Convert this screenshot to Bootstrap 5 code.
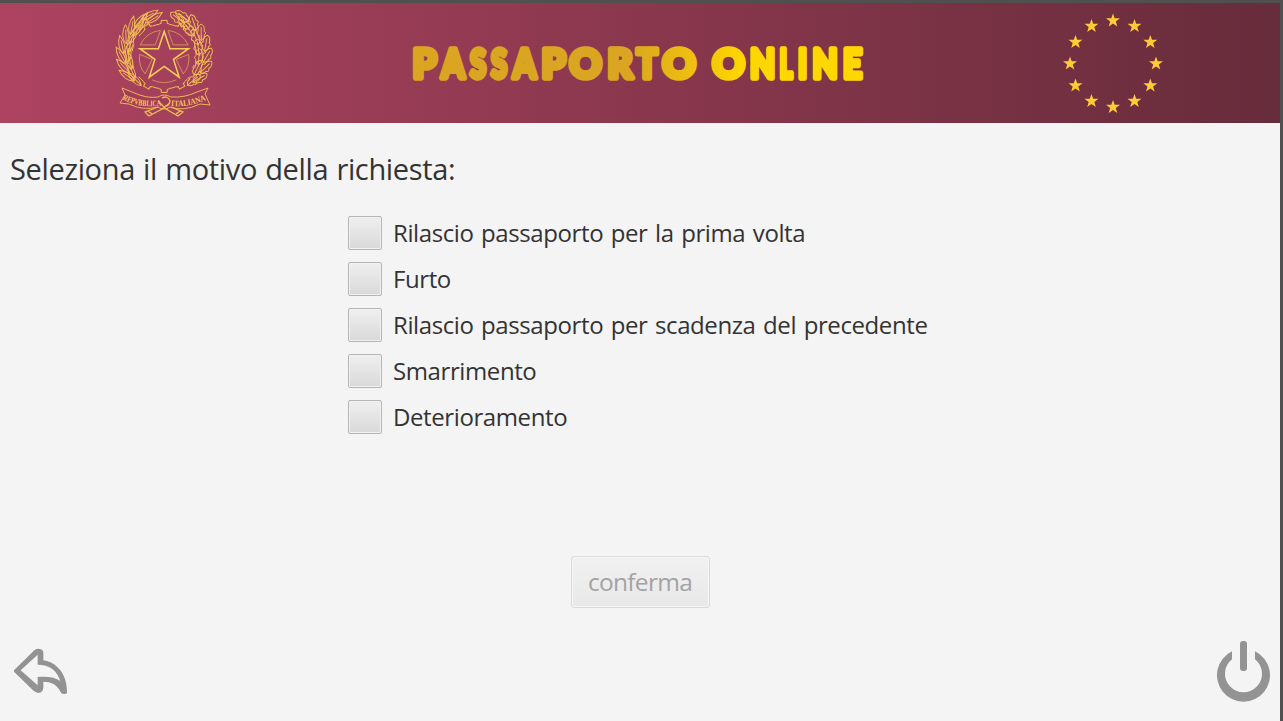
<!DOCTYPE html>
<html lang="it">
<head>
<meta charset="utf-8">
<meta name="viewport" content="width=device-width, initial-scale=1">
<title>Passaporto Online</title>
<link href="https://cdn.jsdelivr.net/npm/bootstrap@5.3.0/dist/css/bootstrap.min.css" rel="stylesheet">
<style>
  body { font-family: "Open Sans", "Noto Sans", sans-serif; color: #333; background: #f4f4f4; }
  .app-window { height: 721px; border-top: 3px solid #505050; border-right: 3px solid #505050; background: #f4f4f4; }
  .app-header { height: 120px; background: linear-gradient(90deg, #ad4360, #672c3b); padding: 0 112px 0 112px; }
  .app-title { font-family: Lato, sans-serif; font-weight: 900; font-size: 40.5px; }
  .question { font-size: 29px; line-height: 40px; padding: 26px 0 0 10px; letter-spacing: -.35px; word-spacing: 1px; }
  .reasons { width: 584px; margin-top: 27px; gap: 12px; }
  .reasons .form-check { min-height: 34px; gap: 11px; font-size: 24px; line-height: 34px; }
  .reasons .form-check-input { width: 34px; height: 34px; border: 1px solid #b5b5b5; border-radius: 2px;
    background: linear-gradient(#efefef, #d9d9d9); box-shadow: inset 0 0 0 1px #f1f1f1; }
  .reasons label { letter-spacing: -.4px; word-spacing: 1.7px; }
  .btn-confirm { width: 139px; height: 52px; margin-top: 122px; font-size: 24.5px; line-height: 36px; letter-spacing: -.7px; border-radius: 3px; }
  .btn-confirm:disabled { color: #a3a3a3; opacity: 1; border-color: #dadada; background: linear-gradient(#f1f1f1, #e8e8e8); box-shadow: inset 0 0 0 1px #f6f6f6; }
  .app-footer { padding: 0 9px 18px 13px; }
  .icon-btn { line-height: 0; color: #939393; }
  .back-btn { margin-bottom: 9px; }
</style>
</head>
<body>
<div class="app-window d-flex flex-column overflow-hidden">
  <header class="app-header d-flex align-items-center justify-content-between flex-shrink-0">
    <svg width="104" height="120" viewBox="112 3 104 120" fill="none" stroke="#f2bd55" stroke-width=".95" aria-hidden="true">
      <defs>
        <path id="olive" d="M0 2C-4-3-3-11 1-17C4-10 4-3 0 2M0 2L1-12"/>
        <path id="oak" d="M0 1Q-4-1-3-4Q-6-6-3-8Q-4-13 0-15Q4-13 3-8Q6-6 3-4Q4-1 0 1M0 2V-12"/>
        <path id="tooth" d="M-5-32.5L-3-33V-36H3V-33L5-32.5"/>
      </defs>
      <g transform="translate(164.2 56.4)">
        <g stroke-width="1">
          <use href="#tooth"/><use href="#tooth" transform="rotate(30)"/><use href="#tooth" transform="rotate(-30)"/>
          <use href="#tooth" transform="rotate(150)"/><use href="#tooth" transform="rotate(-150)"/><use href="#tooth" transform="rotate(180)"/>
          <circle r="32.5" stroke-dasharray="7 10" stroke-dashoffset="-5"/>
        </g>
        <g stroke-width=".8" stroke="#dda155">
          <path d="M-4-26A26 26 0 0 0-24-11.500L-9-11.500L-4-25Z"/>
          <path d="M4-26A26 26 0 0 1 24-11.500L9-11.500L4-25Z"/>
          <path d="M-24.500-2Q-26 10-19 17.500L-12 3Z"/>
          <path d="M24.500-2Q26 10 19 17.500L12 3Z"/>
          <path d="M-12 23.500Q0 29 12 23.500"/>
        </g>
        <path stroke="#ffce55" stroke-width="1.500" d="M0-25L5.800-7.700H24.300L9.300 3L15 20.800L0 10L-15 20.800L-9.300 3L-24.300-7.700H-5.800Z"/>
        <g>
          <use href="#olive" transform="rotate(-25) translate(0 -38) rotate(78)"/>
          <use href="#olive" transform="rotate(-29) translate(0 -43) rotate(85)"/>
          <use href="#olive" transform="rotate(-41) translate(0 -37) rotate(62)"/>
          <use href="#olive" transform="rotate(-43) translate(0 -42) rotate(83)"/>
          <use href="#olive" transform="rotate(-54) translate(0 -37) rotate(84)"/>
          <use href="#olive" transform="rotate(-55) translate(0 -41) rotate(62)"/>
          <use href="#olive" transform="rotate(-67) translate(0 -37) rotate(88)"/>
          <use href="#olive" transform="rotate(-69) translate(0 -41) rotate(64)"/>
          <use href="#olive" transform="rotate(-81) translate(0 -36) rotate(92)"/>
          <use href="#olive" transform="rotate(-84) translate(0 -41) rotate(68)"/>
          <use href="#olive" transform="rotate(-96) translate(0 -36) rotate(92)"/>
          <use href="#olive" transform="rotate(-98) translate(0 -40) rotate(65)"/>
          <use href="#olive" transform="rotate(-109) translate(0 -35) rotate(94)"/>
          <use href="#olive" transform="rotate(-113) translate(0 -39) rotate(66)"/>
          <use href="#olive" transform="rotate(-124) translate(0 -36) rotate(94)"/>
          <use href="#olive" transform="rotate(-127) translate(0 -39) rotate(68)"/>
          <use href="#olive" transform="rotate(-139) translate(0 -37) rotate(90)"/>
        </g>
        <g>
          <use href="#oak" transform="rotate(28) translate(0 -39) rotate(-80)"/>
          <use href="#oak" transform="rotate(33) translate(0 -43) rotate(-85)"/>
          <use href="#oak" transform="rotate(40) translate(0 -37) rotate(-78)"/>
          <use href="#oak" transform="rotate(49) translate(0 -42) rotate(-68)"/>
          <use href="#oak" transform="rotate(53) translate(0 -36) rotate(-88)"/>
          <use href="#oak" transform="rotate(65) translate(0 -41) rotate(-66)"/>
          <use href="#oak" transform="rotate(69) translate(0 -36) rotate(-90)"/>
          <use href="#oak" transform="rotate(81) translate(0 -41) rotate(-70)"/>
          <use href="#oak" transform="rotate(86) translate(0 -35) rotate(-94)"/>
          <use href="#oak" transform="rotate(97) translate(0 -40) rotate(-67)"/>
          <use href="#oak" transform="rotate(102) translate(0 -35) rotate(-98)"/>
          <use href="#oak" transform="rotate(113) translate(0 -40) rotate(-68)"/>
          <use href="#oak" transform="rotate(120) translate(0 -35) rotate(-94)"/>
          <use href="#oak" transform="rotate(130) translate(0 -39) rotate(-70)"/>
          <use href="#oak" transform="rotate(139) translate(0 -37) rotate(-88)"/>
        </g>
      </g>
      <!-- ribbon and crossed stems -->
      <path fill="#a13c59" d="M122 88L132 92Q147 99 158 97Q164 93 171 97Q184 98 197 92L208 88L205 94L210 105L200 104Q183 112 170 107Q164 111 158 107Q143 111 129 104L120 103L125 95Z"/>
      <path stroke-width="1.300" d="M158 107L145 112L149 116L162 109L170 103M171 107L183 112L178 116L166 109L158 101M162 98Q168 95 170 101Q169 106 165 106M148 111L152 114M180 111L176 114"/>
      <path id="mottoL" stroke="none" d="M122.500 99.500Q140 108.500 163 105.500"/>
      <path id="mottoR" stroke="none" d="M171 106Q191 107.500 207.500 99"/>
      <g fill="#f7c657" stroke="none" font-family="Liberation Serif, serif" font-weight="700" font-size="8.500">
        <text><textPath href="#mottoL" textLength="40" lengthAdjust="spacingAndGlyphs">REPVBBLICA</textPath></text>
        <text><textPath href="#mottoR" textLength="36" lengthAdjust="spacingAndGlyphs">ITALIANA</textPath></text>
      </g>
    </svg>

    <h1 class="m-0 lh-1">
      <svg class="app-title" width="460" height="60" viewBox="408 32 460 60">
        <defs>
          <linearGradient id="gold" gradientUnits="userSpaceOnUse" x1="413" x2="863" y1="0" y2="0">
            <stop offset=".48" stop-color="#daa520"/><stop offset=".74" stop-color="#ffd700"/>
          </linearGradient>
        </defs>
        <text y="77.300" fill="url(#gold)" stroke="url(#gold)" stroke-width="5.500" stroke-linejoin="round"><tspan x="413.500" textLength="24" lengthAdjust="spacingAndGlyphs">P</tspan><tspan x="442.500" textLength="23" lengthAdjust="spacingAndGlyphs">A</tspan><tspan x="471" textLength="16" lengthAdjust="spacingAndGlyphs">S</tspan><tspan x="492" textLength="16" lengthAdjust="spacingAndGlyphs">S</tspan><tspan x="514" textLength="23" lengthAdjust="spacingAndGlyphs">A</tspan><tspan x="542.500" textLength="24" lengthAdjust="spacingAndGlyphs">P</tspan><tspan x="570.500" textLength="32" lengthAdjust="spacingAndGlyphs">O</tspan><tspan x="608.500" textLength="25" lengthAdjust="spacingAndGlyphs">R</tspan><tspan x="637.500" textLength="21" lengthAdjust="spacingAndGlyphs">T</tspan><tspan x="663.500" textLength="33" lengthAdjust="spacingAndGlyphs">O</tspan> <tspan x="713.500" textLength="32" lengthAdjust="spacingAndGlyphs">O</tspan><tspan x="751" textLength="25" lengthAdjust="spacingAndGlyphs">N</tspan><tspan x="780.500" textLength="13" lengthAdjust="spacingAndGlyphs">L</tspan><tspan x="799" textLength="9" lengthAdjust="spacingAndGlyphs">I</tspan><tspan x="813.500" textLength="25" lengthAdjust="spacingAndGlyphs">N</tspan><tspan x="844" textLength="19" lengthAdjust="spacingAndGlyphs">E</tspan></text>
      </svg>
    </h1>

    <svg width="110" height="120" viewBox="1058 3 110 120" fill="#ffcc33" aria-hidden="true">
      <defs><path id="star" d="M0-7L1.700-2.200H7L2.800 1L4.300 6L0 3L-4.300 6L-2.800 1L-7-2.200H-1.700Z"/></defs>
      <use href="#star" x="1113" y="20.500"/><use href="#star" x="1134.500" y="26"/><use href="#star" x="1150.300" y="42"/>
      <use href="#star" x="1156" y="63.500"/><use href="#star" x="1150.300" y="85.500"/><use href="#star" x="1134.500" y="101"/>
      <use href="#star" x="1113" y="107"/><use href="#star" x="1091.500" y="101"/><use href="#star" x="1075.500" y="85.500"/>
      <use href="#star" x="1070" y="63.500"/><use href="#star" x="1075.500" y="42"/><use href="#star" x="1091.500" y="26"/>
    </svg>
  </header>

  <main class="d-flex flex-column flex-grow-1">
    <div class="question"><span>Seleziona il motivo della richiesta:</span></div>
    <div class="reasons d-flex flex-column mx-auto">
      <div class="form-check d-flex p-0 m-0"><input class="form-check-input m-0 flex-shrink-0" type="checkbox" id="r1"><label class="text-nowrap" for="r1">Rilascio passaporto per la prima volta</label></div>
      <div class="form-check d-flex p-0 m-0"><input class="form-check-input m-0 flex-shrink-0" type="checkbox" id="r2"><label class="text-nowrap" for="r2">Furto</label></div>
      <div class="form-check d-flex p-0 m-0"><input class="form-check-input m-0 flex-shrink-0" type="checkbox" id="r3"><label class="text-nowrap" for="r3">Rilascio passaporto per scadenza del precedente</label></div>
      <div class="form-check d-flex p-0 m-0"><input class="form-check-input m-0 flex-shrink-0" type="checkbox" id="r4"><label class="text-nowrap" for="r4">Smarrimento</label></div>
      <div class="form-check d-flex p-0 m-0"><input class="form-check-input m-0 flex-shrink-0" type="checkbox" id="r5"><label class="text-nowrap" for="r5">Deterioramento</label></div>
    </div>
    <button class="btn btn-confirm mx-auto p-0" type="button" disabled>conferma</button>
    <footer class="app-footer mt-auto d-flex justify-content-between align-items-end">
      <button class="icon-btn back-btn btn p-0 border-0" type="button" aria-label="Indietro">
        <svg width="56" height="46" viewBox="39 39 168 138" fill="#939393" fill-rule="evenodd">
          <path d="M42 106L103 46Q112 39 123 43Q130 46 130 53V76C172 82 203 120 201 175Q192 179 184 175C173 149 154 140 130 140V158Q129 172 115 174Q106 173 99 166L42 110ZM62 106L113 151V126C143 123 166 127 181 138C171 105 147 89 113 89V59Z"/>
        </svg>
      </button>
      <button class="icon-btn btn p-0 border-0" type="button" aria-label="Esci">
        <svg width="55" height="62" viewBox="1216 641 55 62" fill="#939393">
          <path d="M1232 652V660A18.500 18.500 0 1 0 1255 660V652A26.500 26.500 0 1 1 1232 652Z" transform="translate(0 -.7)"/>
          <rect x="1240" y="641" width="7" height="30" rx="3"/>
        </svg>
      </button>
    </footer>
  </main>
</div>
<script src="https://cdn.jsdelivr.net/npm/bootstrap@5.3.0/dist/js/bootstrap.bundle.min.js"></script>
</body>
</html>
